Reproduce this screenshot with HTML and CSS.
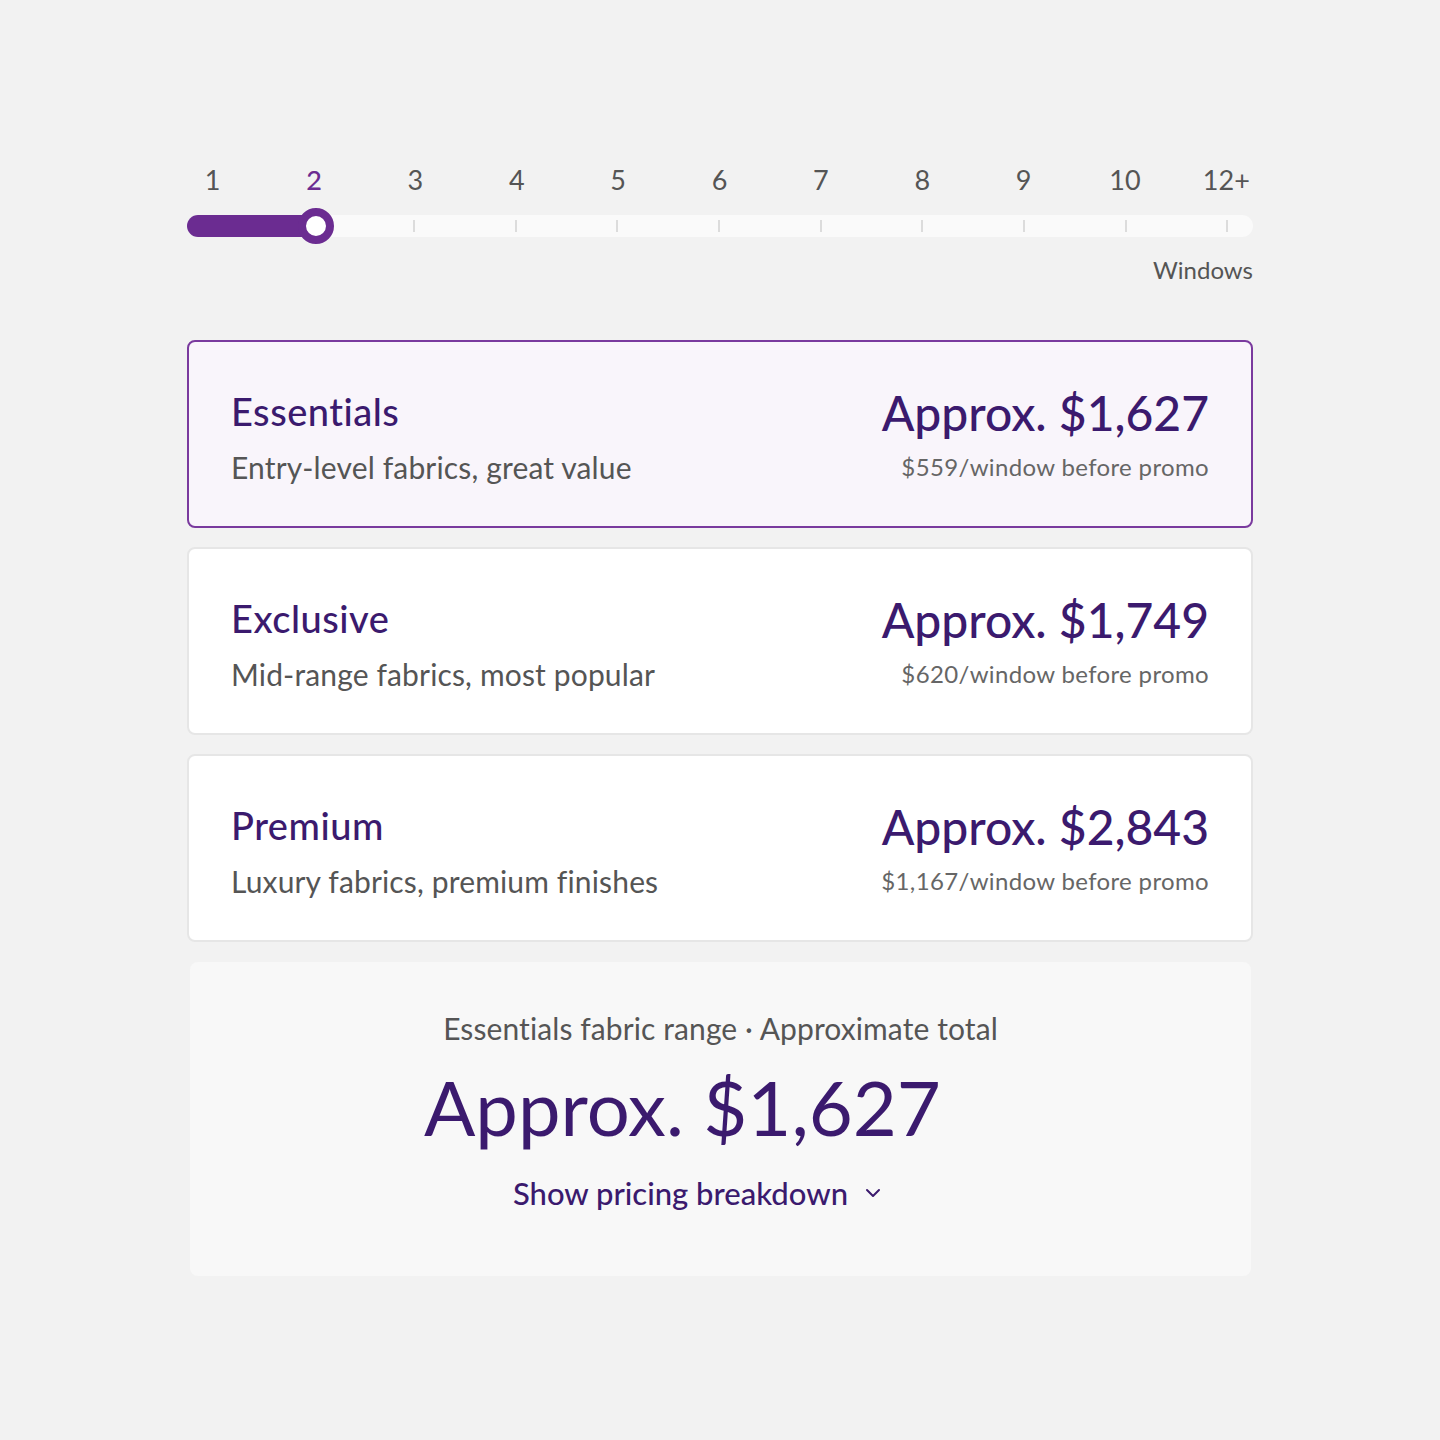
FILE: index.html
```html
<!DOCTYPE html>
<html lang="en">
<head>
    <meta charset="UTF-8">
    <meta name="viewport" content="width=device-width, initial-scale=1.0">
    <title>Window Pricing</title>
    <link rel="stylesheet" href="styles.css">
</head>
<body>
<div class="page">
    <div class="scale">
        <div class="labels">
            <span>1</span>
            <span class="active">2</span>
            <span>3</span>
            <span>4</span>
            <span>5</span>
            <span>6</span>
            <span>7</span>
            <span>8</span>
            <span>9</span>
            <span>10</span>
            <span>12+</span>
        </div>
        <div class="track">
            <div class="ticks">
                <i class="hide"></i><i class="hide"></i>
                <i></i><i></i><i></i><i></i><i></i><i></i><i></i><i></i><i></i>
            </div>
            <div class="fill"></div>
            <div class="thumb"></div>
        </div>
        <div class="unit">Windows</div>
    </div>

    <div class="options">
        <div class="option selected">
            <div class="info">
                <h3>Essentials</h3>
                <p class="desc">Entry-level fabrics, great value</p>
            </div>
            <div class="price">
                <div class="amount">Approx. $1,627</div>
                <p class="per">$559/window before promo</p>
            </div>
        </div>
        <div class="option">
            <div class="info">
                <h3>Exclusive</h3>
                <p class="desc">Mid-range fabrics, most popular</p>
            </div>
            <div class="price">
                <div class="amount">Approx. $1,749</div>
                <p class="per">$620/window before promo</p>
            </div>
        </div>
        <div class="option">
            <div class="info">
                <h3>Premium</h3>
                <p class="desc">Luxury fabrics, premium finishes</p>
            </div>
            <div class="price">
                <div class="amount">Approx. $2,843</div>
                <p class="per">$1,167/window before promo</p>
            </div>
        </div>
    </div>

    <div class="summary">
        <p class="caption">Essentials fabric range · Approximate total</p>
        <div class="total">Approx. $1,627</div>
        <button class="breakdown">Show pricing breakdown
            <svg width="18" height="18" viewBox="0 0 18 18"><path d="M3 6l6 6 6-6" fill="none" stroke="currentColor" stroke-width="2" stroke-linecap="round" stroke-linejoin="round"/></svg>
        </button>
    </div>
</div>
</body>
</html>
```

FILE: styles.css
```css
body {
    margin: 0;
    padding: 0;
    background-color: #f2f2f2;
    font-family: Lato, "Open Sans", sans-serif;
    color: #555;
}
.page {
    width: 1066px;
    margin: 0 auto;
    padding-top: 163px;
}
.labels {
    display: grid;
    grid-template-columns: repeat(11, 1fr);
    width: 1115px;
    margin-left: -25px;
    text-align: center;
    font-size: 27px;
    line-height: 34px;
    color: #555;
}
.labels .active {
    color: #6b2c91;
    font-weight: 500;
}
.track {
    position: relative;
    height: 22px;
    margin-top: 18px;
    background-color: #fafafa;
    border-radius: 11px;
}
.ticks {
    position: absolute;
    top: 5px;
    left: -27px;
    right: -25px;
    display: grid;
    grid-template-columns: repeat(11, 1fr);
    justify-items: center;
}
.ticks i {
    width: 2px;
    height: 12px;
    background-color: #dcdcdc;
}
.ticks i.hide {
    visibility: hidden;
}
.fill {
    position: absolute;
    left: 0;
    top: 0;
    width: 130px;
    height: 22px;
    background-color: #6b2c91;
    border-radius: 11px 0 0 11px;
}
.thumb {
    position: absolute;
    left: 111px;
    top: -7px;
    width: 20px;
    height: 20px;
    border: 8px solid #6b2c91;
    border-radius: 50%;
    background-color: #fff;
}
.unit {
    text-align: right;
    font-size: 24px;
    margin-top: 18px;
    color: #555;
}
.options {
    margin-top: 56px;
    display: flex;
    flex-direction: column;
    gap: 19px;
}
.option {
    display: flex;
    justify-content: space-between;
    align-items: center;
    height: 184px;
    padding: 0 42px;
    background-color: #fff;
    border: 2px solid #e6e6e6;
    border-radius: 8px;
}
.option.selected {
    background-color: #f9f5fb;
    border-color: #7a3a9e;
}
.info {
    padding-top: 6px;
}
h3 {
    margin: 0;
    font-size: 38px;
    font-weight: 500;
    letter-spacing: 0.5px;
    color: #3b1a6e;
    line-height: 44px;
}
.desc {
    margin: 16px 0 0;
    font-size: 30px;
    letter-spacing: 0.15px;
    line-height: 36px;
    color: #555;
}
.price {
    text-align: right;
}
.amount {
    font-size: 48px;
    font-weight: 500;
    color: #3b1a6e;
    line-height: 54px;
}
.per {
    margin: 12px 0 0;
    font-size: 24px;
    letter-spacing: 0.35px;
    line-height: 30px;
    color: #666;
}
.summary {
    margin: 20px 2px 0 3px;
    height: 314px;
    background-color: #f8f8f8;
    border-radius: 8px;
    display: flex;
    flex-direction: column;
    align-items: center;
    box-sizing: border-box;
    padding-top: 48px;
}
.caption {
    margin: 0;
    font-size: 30px;
    letter-spacing: 0.1px;
    line-height: 36px;
    color: #555;
}
.total {
    margin-top: 16px;
    padding-right: 76px;
    font-size: 76px;
    line-height: 90px;
    color: #3b1a6e;
}
.breakdown {
    margin-top: 22px;
    margin-right: 46px;
    padding: 0;
    border: none;
    background: none;
    font-family: inherit;
    font-size: 31px;
    font-weight: 500;
    color: #3b1a6e;
    display: flex;
    align-items: center;
    gap: 16px;
    cursor: pointer;
}
```
